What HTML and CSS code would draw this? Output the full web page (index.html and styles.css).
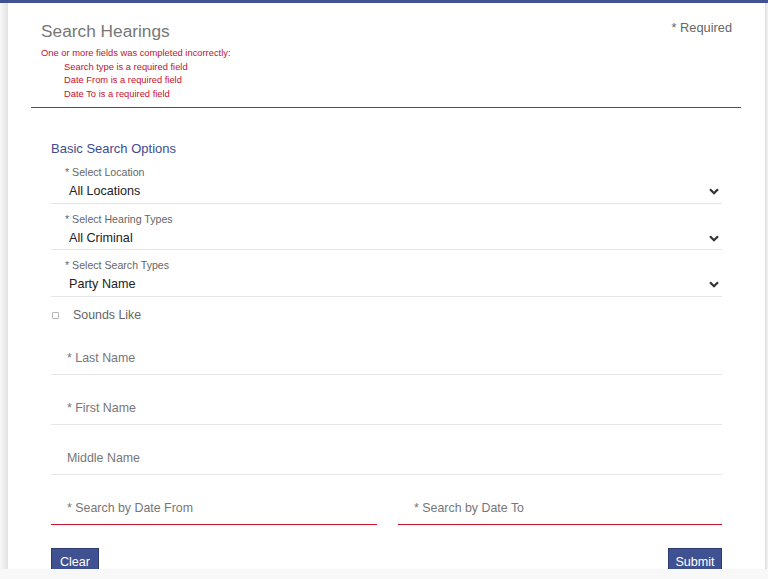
FILE: index.html
```html
<!DOCTYPE html>
<html lang="en">
<head>
<meta charset="utf-8">
<title>Search Hearings</title>
<link rel="stylesheet" href="styles.css">
</head>
<body>
<div class="topbar"></div>
<div class="page">
  <div class="gutter"></div>
  <main class="card">
    <header class="head">
      <div class="titles">
        <h1 class="title">Search Hearings</h1>
        <div class="errors">
          <div class="err-lead">One or more fields was completed incorrectly:</div>
          <div class="err-item">Search type is a required field</div>
          <div class="err-item">Date From is a required field</div>
          <div class="err-item">Date To is a required field</div>
        </div>
      </div>
      <div class="req">* Required</div>
    </header>

    <section class="form">
      <h2 class="section-title">Basic Search Options</h2>

      <div class="select-group">
        <div class="sel-label">* Select Location</div>
        <div class="sel-value"><span>All Locations</span>
          <svg class="chev" width="10" height="7" viewBox="0 0 10 7"><path d="M1 1.3 L5 5.3 L9 1.3" fill="none" stroke="#333" stroke-width="2.2"/></svg>
        </div>
      </div>
      <div class="select-group">
        <div class="sel-label">* Select Hearing Types</div>
        <div class="sel-value"><span>All Criminal</span>
          <svg class="chev" width="10" height="7" viewBox="0 0 10 7"><path d="M1 1.3 L5 5.3 L9 1.3" fill="none" stroke="#333" stroke-width="2.2"/></svg>
        </div>
      </div>
      <div class="select-group">
        <div class="sel-label">* Select Search Types</div>
        <div class="sel-value"><span>Party Name</span>
          <svg class="chev" width="10" height="7" viewBox="0 0 10 7"><path d="M1 1.3 L5 5.3 L9 1.3" fill="none" stroke="#333" stroke-width="2.2"/></svg>
        </div>
      </div>

      <label class="check-row"><span class="box"></span><span>Sounds Like</span></label>

      <div class="input">* Last Name</div>
      <div class="input">* First Name</div>
      <div class="input">Middle Name</div>

      <div class="date-row">
        <div class="input invalid">* Search by Date From</div>
        <div class="input invalid">* Search by Date To</div>
      </div>

      <div class="actions">
        <button class="btn btn-clear">Clear</button>
        <button class="btn btn-submit">Submit</button>
      </div>
    </section>
  </main>
  <div class="rightedge"></div>
</div>
<div class="bottombar"></div>
</body>
</html>
```

FILE: styles.css
```css
* { box-sizing: border-box; }

html, body {
  margin: 0;
  padding: 0;
  background: #f8f8f8;
  font-family: "Liberation Sans", Arial, sans-serif;
  overflow: hidden;
}

.topbar {
  height: 3px;
  background: #415294;
}

.page {
  display: flex;
  min-height: 576px;
}

.gutter {
  width: 8px;
  flex: none;
  background: linear-gradient(to right, #f7f7f7, #e2e2e2);
}

.rightedge {
  width: 3px;
  flex: none;
  background: linear-gradient(to right, #dcdcdc, #f4f4f4);
}

.card {
  flex: 1;
  background: #fff;
}

.head {
  display: flex;
  justify-content: space-between;
  align-items: flex-start;
  margin: 0 24px 0 23px;
  padding-top: 17px;
  padding-bottom: 6px;
  border-bottom: 1px solid #d0142e;
}

.titles {
  padding-left: 10px;
}

.title {
  margin: 0;
  font-size: 17.3px;
  line-height: 22px;
  font-weight: normal;
  color: #777;
}

.errors {
  margin-top: 5px;
  font-size: 9.35px;
  line-height: 13.5px;
  color: #c8102e;
}

.err-item {
  padding-left: 23px;
}

.req {
  padding-right: 9px;
  padding-top: 1px;
  font-size: 12.8px;
  line-height: 14px;
  color: #666;
}

.form {
  padding: 0 43px;
}

.section-title {
  margin: 32px 0 0;
  font-size: 13px;
  line-height: 17px;
  font-weight: normal;
  color: #3e4c8e;
}

.select-group {
  padding: 8px 0 2.5px;
  border-bottom: 1px solid #e6e6e6;
}

.sel-label {
  padding-left: 14px;
  font-size: 10.6px;
  line-height: 14px;
  color: #666;
}

.sel-value {
  display: flex;
  justify-content: space-between;
  align-items: center;
  margin-top: 4px;
  padding: 0 3px 0 18px;
  font-size: 12.6px;
  line-height: 17px;
  color: #222;
}

.chev {
  display: block;
}

.check-row {
  display: flex;
  align-items: center;
  margin-top: 10px;
  font-size: 12.4px;
  line-height: 17px;
  color: #666;
}

.box {
  width: 7px;
  height: 7px;
  margin: 0 14px 0 1px;
  border: 1px solid #b5b5b5;
  border-radius: 1px;
}

.input {
  margin-top: 17px;
  height: 33px;
  padding: 0 0 0 16px;
  display: flex;
  align-items: center;
  border-bottom: 1px solid #e6e6e6;
  font-size: 12.4px;
  color: #777;
}

.check-row + .input {
  margin-top: 18px;
}

.date-row {
  display: grid;
  grid-template-columns: 326px 1fr;
  gap: 21px;
  margin-top: 17px;
}

.date-row .input {
  margin-top: 0;
}

.input.invalid {
  border-bottom-color: #d0142e;
}

.actions {
  display: flex;
  justify-content: space-between;
  margin-top: 23px;
}

.btn {
  height: 28px;
  padding: 0;
  background: #3f5190;
  border: 1px solid #2c3a72;
  border-radius: 0;
  color: #fff;
  font-family: "Liberation Sans", Arial, sans-serif;
  font-size: 12.6px;
  line-height: 26px;
  text-align: center;
}

.btn-clear {
  width: 48px;
}

.btn-submit {
  width: 54px;
}

.bottombar {
  position: fixed;
  left: 0;
  right: 0;
  bottom: 0;
  height: 10px;
  background: #f8f8f8;
}
```
